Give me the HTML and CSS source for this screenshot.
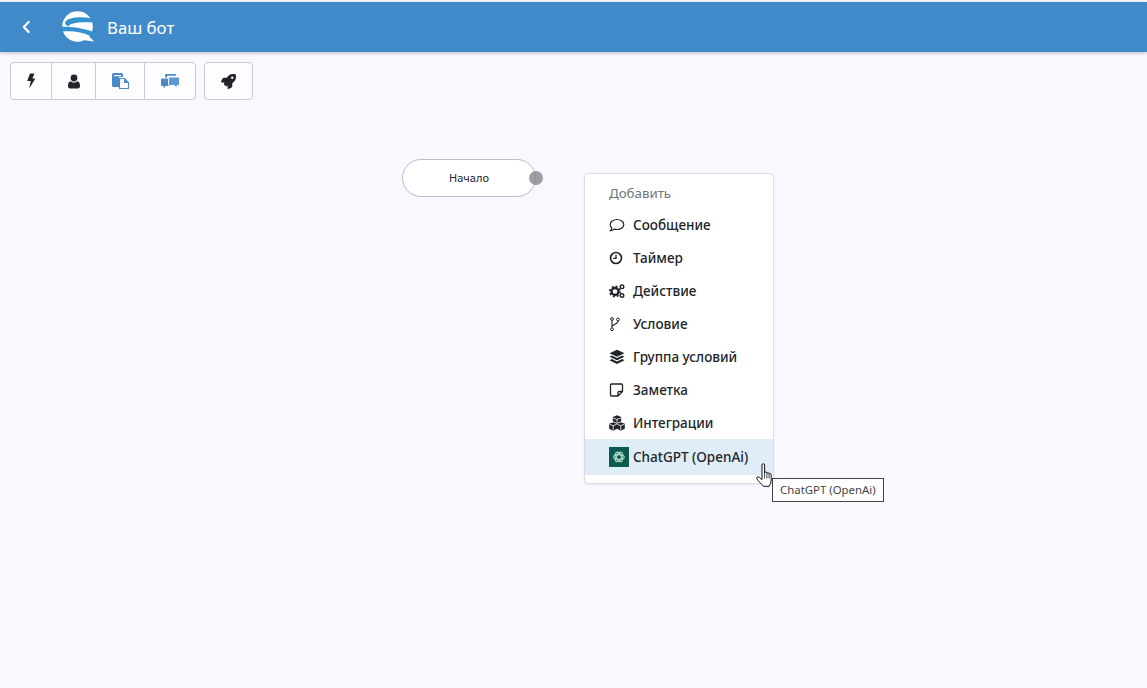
FILE: index.html
```html
<!DOCTYPE html>
<html lang="ru">
<head>
    <meta charset="UTF-8">
    <title>Ваш бот</title>
    <link rel="stylesheet" href="styles.css">
</head>
<body>
    <header class="topbar">
        <a class="back" href="#">
            <svg viewBox="0 0 10 14" width="10" height="14"><path d="M7.600 2 2.800 7l4.800 5" fill="none" stroke="#fff" stroke-width="2.200" stroke-linecap="round" stroke-linejoin="round"/></svg>
        </a>
        <svg class="logo" viewBox="0 0 32 32" width="32" height="32">
            <circle cx="15.500" cy="15.500" r="15.300" fill="#fff"/>
            <path d="M21 29l11 1.500-6-6.500z" fill="#fff"/>
            <path d="M30 7.500C20 5.500 8 6 4 10c-2 2-1 4 3 5.500C7 12.500 15 10.500 32 11.500z" fill="#3592cf"/>
            <path d="M0 15.500c9 .2 22 1.500 32 5.800l-3 4C20 20.500 9 19.500 0 20.500z" fill="#3592cf"/>
        </svg>
        <h1 class="title">Ваш бот</h1>
    </header>

    <div class="toolbar">
        <div class="btn-group">
            <button class="tool tool-bolt">
                <svg viewBox="0 0 10 16" width="10" height="16"><path d="M4 .5h4.500L6.400 5.600H9.400L3.200 15.500 4.800 8H1.200z" fill="#212529"/></svg>
            </button>
            <button class="tool tool-user">
                <svg viewBox="0 0 12 15" width="12" height="15"><circle cx="6" cy="4" r="3.400" fill="#212529"/><path d="M2.500 7.300C3.500 8.200 4.600 8.500 6 8.500s2.500-.3 3.500-1.200c1.700.3 2.500 2.200 2.500 4.700 0 1.700-1 2.500-2.200 2.500H2.200C1 14.500 0 13.700 0 12c0-2.500.8-4.400 2.500-4.700z" fill="#212529"/></svg>
            </button>
            <button class="tool tool-docs">
                <svg viewBox="0 0 17 16" width="17" height="16">
                    <path d="M0 1.500A1.500 1.500 0 0 1 1.500 0h8A1.500 1.500 0 0 1 11 1.500V4H7v10H1.500A1.500 1.500 0 0 1 0 12.500z" fill="#4a8ac6"/>
                    <rect x="2" y="2" width="7" height="1.200" fill="#fff"/>
                    <path d="M7.500 5.500h5l4 4v6h-9z" fill="#fff" stroke="#4a8ac6" stroke-width="1.200"/>
                    <path d="M12 5.500v4.500h4.500z" fill="#4a8ac6"/>
                </svg>
            </button>
            <button class="tool tool-chat">
                <svg viewBox="0 0 19 15" width="19" height="15">
                    <path d="M5 0h9a1 1 0 0 1 1 1v.8H6V3.500H4V1a1 1 0 0 1 1-1z" fill="#4a8ac6"/>
                    <path d="M1 4.500h7a1 1 0 0 1 1 1v5.500a1 1 0 0 1-1 1H4.500L2.500 14.500V12H1a1 1 0 0 1-1-1V5.500a1 1 0 0 1 1-1z" fill="#4a8ac6"/>
                    <path d="M8.500 3h9a1 1 0 0 1 1 1v6.500a1 1 0 0 1-1 1h-1.500v2.800l-2.600-2.800H8.500a1 1 0 0 1-1-1V4a1 1 0 0 1 1-1z" fill="#5b9ad2" stroke="#fdfcff" stroke-width="1"/>
                </svg>
            </button>
        </div>
        <div class="btn-group">
            <button class="tool tool-rocket">
                <svg viewBox="0 0 512 512" width="15" height="15"><path fill="#212529" d="M505.120 19.094c-1.189-5.531-6.658-11-12.207-12.188C460.716 0 435.507 0 410.407 0 307.175 0 245.269 55.203 199.052 128H94.838c-16.348.016-35.557 11.875-42.887 26.484L2.516 253.297A28.400 28.400 0 0 0 0 264a24.009 24.009 0 0 0 24.006 24h103.810l-22.475 22.469c-11.365 11.361-12.996 32.258 0 45.250l50.904 50.906c11.156 11.188 32.156 13.156 45.277 0l22.475-22.469V488a24.009 24.009 0 0 0 24.006 24 28.559 28.559 0 0 0 10.707-2.516l98.728-49.391c14.629-7.297 26.508-26.500 26.508-42.859V312.797c72.598-46.313 128.035-108.406 128.035-211.094.001-25.203.001-50.406-6.955-82.609zM384.040 168a40 40 0 1 1 40.010-40 40.023 40.023 0 0 1-40.010 40z"/></svg>
            </button>
        </div>
    </div>

    <main class="canvas">
        <div class="node">
            <span>Начало</span>
            <i class="port"></i>
        </div>

        <div class="menu">
            <div class="menu-title">Добавить</div>
            <div class="menu-item">
                <svg viewBox="0 0 16 16" width="16" height="16"><path d="M8 2.500c3.700 0 6.800 2.200 6.800 5s-3.100 5-6.800 5c-1 0-1.900-.2-2.700-.4C4.400 12.900 3 13.700 1.500 13.700c.7-.7 1.200-1.700 1.300-2.500C1.900 10.300 1.200 9 1.200 7.500c0-2.800 3.100-5 6.800-5z" fill="none" stroke="#212529" stroke-width="1.200"/></svg>
                <span>Сообщение</span>
            </div>
            <div class="menu-item">
                <svg viewBox="0 0 16 16" width="16" height="16"><circle cx="7" cy="8" r="5.500" fill="none" stroke="#212529" stroke-width="1.700"/><path d="M7 4.800V8.300H4.200" fill="none" stroke="#212529" stroke-width="1.300"/></svg>
                <span>Таймер</span>
            </div>
            <div class="menu-item">
                <svg viewBox="0 0 16 16" width="16" height="16">
                    <circle cx="6" cy="8.500" r="3.500" fill="none" stroke="#212529" stroke-width="2.300"/>
                    <circle cx="6" cy="8.500" r="5.200" fill="none" stroke="#212529" stroke-width="1.600" stroke-dasharray="2 2.080"/>
                    <circle cx="13" cy="3.800" r="1.800" fill="none" stroke="#212529" stroke-width="1.400"/>
                    <circle cx="13" cy="12.500" r="1.800" fill="none" stroke="#212529" stroke-width="1.400"/>
                </svg>
                <span>Действие</span>
            </div>
            <div class="menu-item">
                <svg viewBox="0 0 16 16" width="16" height="16">
                    <circle cx="3" cy="3" r="1.400" fill="none" stroke="#212529" stroke-width="1"/>
                    <circle cx="3" cy="13.300" r="1.400" fill="none" stroke="#212529" stroke-width="1"/>
                    <circle cx="9" cy="3.500" r="1.400" fill="none" stroke="#212529" stroke-width="1"/>
                    <path d="M3 4.500v7.300M9 5c0 3.500-6 3-6 6" fill="none" stroke="#212529" stroke-width="1.100"/>
                </svg>
                <span>Условие</span>
            </div>
            <div class="menu-item">
                <svg viewBox="0 0 16 16" width="16" height="16">
                    <path d="M8 .8 15.500 4.300 8 7.800.5 4.300z" fill="#212529"/>
                    <path d="M2.800 6.600.5 7.800 8 11.300l7.500-3.500-2.300-1.200L8 9z" fill="#212529"/>
                    <path d="M2.800 10.100.5 11.300 8 15l7.500-3.700-2.300-1.200L8 12.600z" fill="#212529"/>
                </svg>
                <span>Группа условий</span>
            </div>
            <div class="menu-item">
                <svg viewBox="0 0 16 16" width="16" height="16"><path d="M13.500 9.500V3a1 1 0 0 0-1-1h-10a1 1 0 0 0-1 1v10a1 1 0 0 0 1 1h6.500zM13.500 9.500H10a1 1 0 0 0-1 1V14" fill="none" stroke="#212529" stroke-width="1.300" stroke-linejoin="round"/></svg>
                <span>Заметка</span>
            </div>
            <div class="menu-item">
                <svg viewBox="0 0 16 16" width="16" height="16">
                    <path d="M8 .3 12.200 2v4.300L8 8 3.800 6.300V2z" fill="#212529"/>
                    <path d="M4.200 7.300 8 8.800v5l-3.800 1.900L.2 13.800v-5z" fill="#212529"/>
                    <path d="M11.800 7.300 15.800 8.800v5l-4 1.900L8 13.800v-5z" fill="#212529"/>
                    <path d="M4.200 3 8 4.400 11.800 3M8 4.400V7.700M.6 9.200l3.600 1.500 3.500-1.500M4.200 10.700v4.500M8.300 9.200l3.500 1.500 3.600-1.500M11.800 10.700v4.500" fill="none" stroke="#fff" stroke-width=".8"/>
                </svg>
                <span>Интеграции</span>
            </div>
            <div class="menu-item menu-item-active">
                <svg class="gpt-icon" viewBox="0 0 20 20" width="20" height="20">
                    <rect width="20" height="20" fill="#0c5a50"/>
                    <g fill="none" stroke="#a8d6c6" stroke-width="1.300">
                        <ellipse cx="10" cy="10" rx="5.200" ry="2.500"/>
                        <ellipse cx="10" cy="10" rx="5.200" ry="2.500" transform="rotate(60 10 10)"/>
                        <ellipse cx="10" cy="10" rx="5.200" ry="2.500" transform="rotate(120 10 10)"/>
                    </g>
                </svg>
                <span>ChatGPT (OpenAi)</span>
            </div>
        </div>

        <svg class="cursor" viewBox="0 0 18 25" width="18" height="25">
            <path d="M6 2c0-1.800 2.600-1.800 2.600 0v7.800c.2-1.200 2.100-1.200 2.300 0v.6c.2-1.100 2-1 2.200.1v.6c.2-.9 2-.8 2.100.5v5.400c0 2.900-1.100 4.500-2.200 6.300H7.500C5.800 21.500 2.300 18 .9 15.900c-.9-1.500.9-2.900 2.200-1.700L6 16.600z" fill="#fff" stroke="#111" stroke-width="1" stroke-linejoin="round"/>
            <path d="M8.600 10v5.500M10.900 10.500v5M13.100 11v4.500" stroke="#111" stroke-width=".8"/>
        </svg>
        <div class="tooltip">ChatGPT (OpenAi)</div>
    </main>
</body>
</html>
```

FILE: styles.css
```css
/* Global Styles */
html, body {
    height: 100%;
}

body {
    margin: 0;
    display: flex;
    flex-direction: column;
    overflow: hidden;
    background-color: #f9f7ff;
    font-family: 'Noto Sans', 'Open Sans', sans-serif;
    color: #212529;
}

/* Top bar */
.topbar {
    flex: none;
    display: flex;
    align-items: center;
    height: 50px;
    margin-top: 2px;
    background-color: #418aca;
    box-shadow: 0 1px 4px rgba(0, 0, 0, 0.25);
}

.back {
    display: flex;
    width: 10px;
    margin-left: 21px;
}

.logo {
    margin-left: 31px;
}

.title {
    margin: 0 0 0 13px;
    font-size: 16.800px;
    font-weight: 400;
    color: #fff;
}

/* Toolbar */
.toolbar {
    flex: none;
    display: flex;
    gap: 8px;
    padding: 10px 10px 0;
}

.btn-group {
    display: flex;
    height: 38px;
    box-sizing: border-box;
    border: 1px solid #c9c9d2;
    border-radius: 4px;
    background-color: #fdfcff;
}

.tool {
    display: flex;
    align-items: center;
    justify-content: center;
    padding: 0;
    border: none;
    border-left: 1px solid #c9c9d2;
    background: none;
}

.tool:first-child {
    border-left: none;
}

.tool-bolt { width: 40px; }
.tool-user { width: 44px; }
.tool-docs { width: 49px; }
.tool-chat { width: 51px; }
.tool-rocket { width: 47px; }

/* Canvas */
.canvas {
    position: relative;
    flex: 1;
}

.node {
    position: absolute;
    left: 402px;
    top: 59px;
    display: flex;
    align-items: center;
    justify-content: center;
    width: 134px;
    height: 38px;
    padding-bottom: 2px;
    box-sizing: border-box;
    border: 1px solid #bdbdc4;
    border-radius: 19px;
    background-color: #fff;
    font-size: 11px;
}

.port {
    position: absolute;
    right: -8px;
    top: 11px;
    width: 14px;
    height: 14px;
    border-radius: 50%;
    background-color: rgba(118, 118, 124, 0.7);
}

/* Add menu */
.menu {
    position: absolute;
    left: 584px;
    top: 73px;
    width: 190px;
    box-sizing: border-box;
    padding: 9px 0 8px;
    border: 1px solid #dcdce2;
    border-radius: 4px;
    background-color: #fff;
    box-shadow: 0 1px 2px rgba(0, 0, 0, 0.08);
}

.menu-title {
    height: 25px;
    line-height: 21px;
    padding-left: 24px;
    font-size: 13.300px;
    color: #6c757d;
}

.menu-item {
    display: flex;
    align-items: center;
    gap: 8px;
    height: 33px;
    padding-left: 24px;
    font-size: 13.500px;
    font-weight: 500;
}

.menu-item svg {
    flex: none;
}

.menu-item-active {
    height: 36px;
    background-color: #deedf7;
}

.menu-item .gpt-icon {
    margin-right: -4px;
}

/* Hover overlays */
.cursor {
    position: absolute;
    left: 756px;
    top: 363px;
}

.tooltip {
    position: absolute;
    left: 772px;
    top: 378px;
    padding: 0 7px;
    height: 24px;
    line-height: 22px;
    box-sizing: border-box;
    border: 1px solid #444;
    background-color: #fff;
    font-size: 11.400px;
    color: #444;
}
```
